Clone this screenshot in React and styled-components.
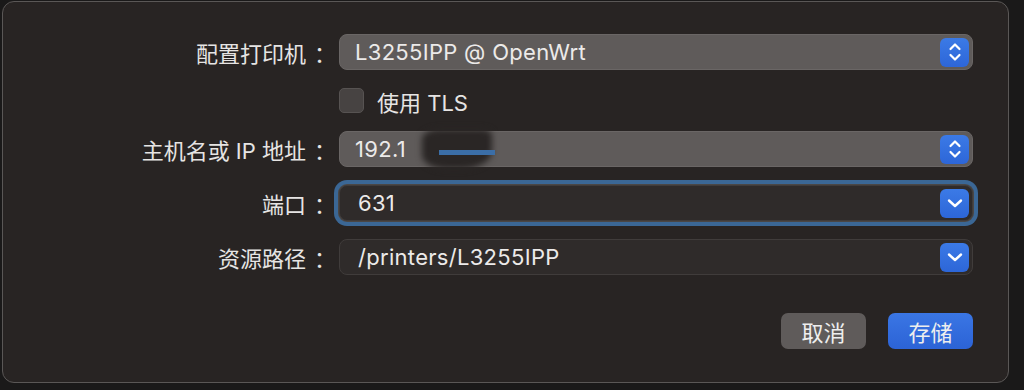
import React from "react";
import styled, { createGlobalStyle } from "styled-components";

const Global = createGlobalStyle`
  html, body { margin: 0; padding: 0; background: #1a1919; }
  body { width: 1024px; height: 390px; overflow: hidden; font-family: "Inter", "Noto Sans CJK SC", sans-serif; }
`;

const Panel = styled.div`
  box-sizing: border-box;
  margin: 1px 0 0 2px;
  width: 1007px;
  height: 382px;
  background: #282423;
  border: 1px solid #5a5756;
  border-radius: 12px;
  padding: 32px 0 0 1px;
`;

const Form = styled.div`
  display: grid;
  grid-template-columns: 332px 634px;
  grid-template-rows: 36px 25px 36px 36px 36px;
  column-gap: 3px;
  row-gap: 18px;
`;

const Label = styled.div`
  display: flex;
  align-items: center;
  justify-content: flex-end;
  color: #e6e4e3;
  font-size: 22px;
  font-family: "Inter", "Noto Sans CJK SC", sans-serif;
  white-space: nowrap;
`;

const Colon = styled.span`
  display: inline-block;
  width: 22px;
  margin-left: 8px;
  font-family: "Noto Sans CJK SC", sans-serif;
`;

const Field = styled.div`
  position: relative;
  box-sizing: border-box;
  display: flex;
  align-items: center;
  padding: 0 3px 0 ${(p) => (p.$pad ? p.$pad : 15)}px;
  border-radius: 8px;
  background: ${(p) => (p.$dark ? "#2f2b2a" : "#5f5b5a")};
  border: 1px solid ${(p) => (p.$dark ? "#403c3b" : "#6a6665")};
  ${(p) => p.$focus && `box-shadow: 0 0 0 1px #4a4746, 0 0 0 5px #3b6795;`}
  color: #eceae9;
`;

const Value = styled.span`
  flex: 1;
  font-family: "Inter", "Noto Sans CJK SC", sans-serif;
  font-size: 22px;
  letter-spacing: 0.3px;
`;

const Stepper = styled.div`
  width: 29px;
  height: 29px;
  border-radius: 6px;
  background: linear-gradient(#3b7ae6, #2d66d8);
  display: flex;
  align-items: center;
  justify-content: center;
`;

const CheckRow = styled.div`
  display: flex;
  align-items: center;
  gap: 13px;
  color: #e6e4e3;
  font-size: 22px;
  font-family: "Inter", "Noto Sans CJK SC", sans-serif;
`;

const Box = styled.div`
  box-sizing: border-box;
  width: 25px;
  height: 25px;
  border-radius: 5px;
  background: #474342;
  border: 1px solid #575352;
`;

const Redact = styled.div`
  position: absolute;
  top: -3px;
  bottom: -3px;
  left: 82px;
  width: 70px;
  background: #2a2625;
  filter: blur(3px);
  border-radius: 25% 15% 45% 35%;
`;

const RedactLine = styled.div`
  position: absolute;
  top: 18px;
  left: 99px;
  width: 56px;
  height: 5px;
  background: #3b6ea7;
`;

const Footer = styled.div`
  grid-column: 2;
  display: flex;
  justify-content: flex-end;
  gap: 22px;
  margin-top: 20px;
`;

const Button = styled.button`
  width: 85px;
  height: 36px;
  border: none;
  border-radius: 7px;
  background: ${(p) => (p.$primary ? "linear-gradient(#3a76e4, #2c63d6)" : "#5f5b5a")};
  color: #eeeeee;
  font-size: 22px;
  font-family: "Noto Sans CJK SC", sans-serif;
  padding: 0;
`;

const UpDown = () => (
  <svg width="14" height="20" viewBox="0 0 14 20" fill="none" stroke="#fff" strokeWidth="2.2" strokeLinecap="round" strokeLinejoin="round">
    <polyline points="2.5,7 7,2.5 11.5,7" />
    <polyline points="2.5,13 7,17.5 11.5,13" />
  </svg>
);

const Down = () => (
  <svg width="16" height="10" viewBox="0 0 16 10" fill="none" stroke="#fff" strokeWidth="2.4" strokeLinecap="round" strokeLinejoin="round">
    <polyline points="2,2.5 8,8 14,2.5" />
  </svg>
);

export default function App() {
  return (
    <>
      <Global />
      <Panel>
        <Form>
          <Label>配置打印机<Colon>：</Colon></Label>
          <Field>
            <Value>L3255IPP @ OpenWrt</Value>
            <Stepper><UpDown /></Stepper>
          </Field>

          <div />
          <CheckRow>
            <Box />
            <span>使用 TLS</span>
          </CheckRow>

          <Label>主机名或 IP 地址<Colon>：</Colon></Label>
          <Field>
            <Value>192.1</Value>
            <Redact />
            <RedactLine />
            <Stepper><UpDown /></Stepper>
          </Field>

          <Label>端口<Colon>：</Colon></Label>
          <Field $dark $focus $pad={18}>
            <Value>631</Value>
            <Stepper><Down /></Stepper>
          </Field>

          <Label>资源路径<Colon>：</Colon></Label>
          <Field $dark $pad={18}>
            <Value>/printers/L3255IPP</Value>
            <Stepper><Down /></Stepper>
          </Field>

          <Footer>
            <Button>取消</Button>
            <Button $primary>存储</Button>
          </Footer>
        </Form>
      </Panel>
    </>
  );
}
